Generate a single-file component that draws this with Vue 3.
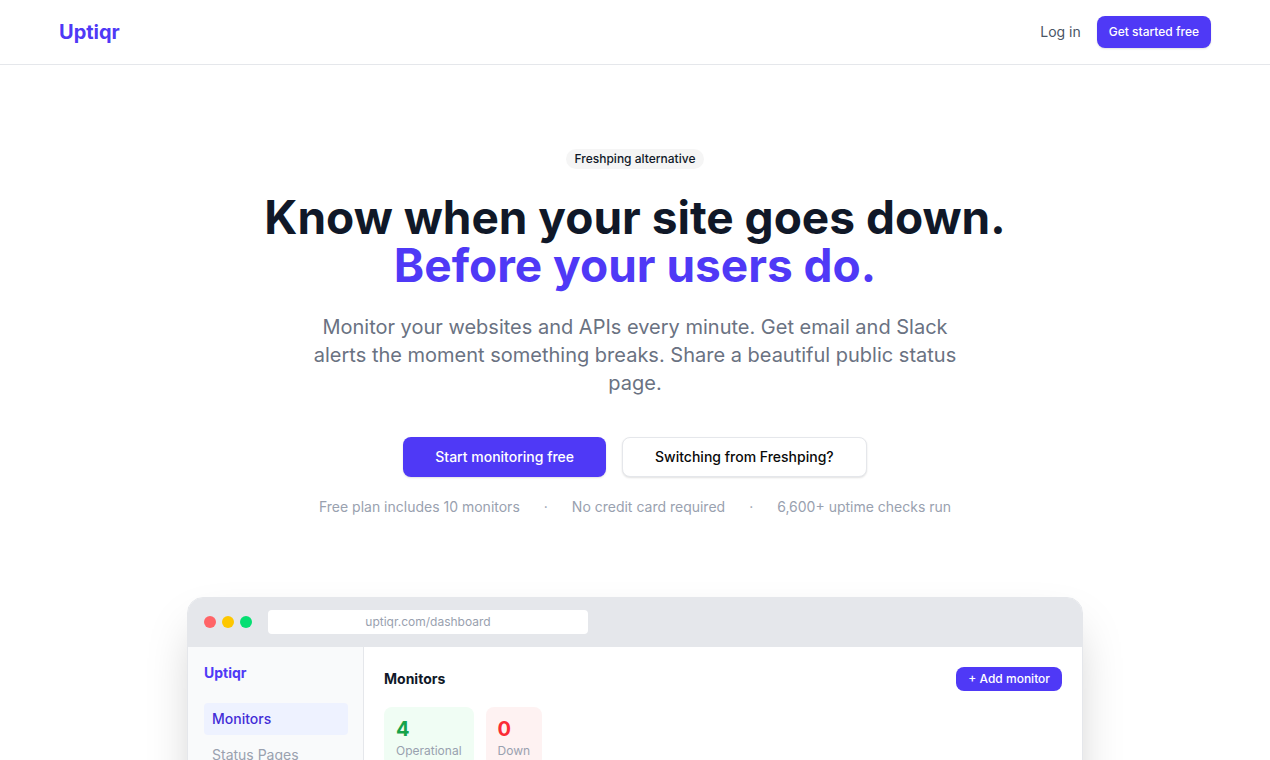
<script setup>
const notes = ['Free plan includes 10 monitors', 'No credit card required', '6,600+ uptime checks run']
const stats = [
  { value: 4, label: 'Operational', tone: 'up' },
  { value: 0, label: 'Down', tone: 'down' },
]
</script>

<template>
  <div class="page">
    <header class="site-header">
      <nav class="nav">
        <a class="brand" href="#">Uptiqr</a>
        <div class="nav-actions">
          <a class="login" href="#login">Log in</a>
          <button class="btn btn-small" type="button">Get started free</button>
        </div>
      </nav>
    </header>

    <main>
      <section class="hero">
        <span class="badge">Freshping alternative</span>
        <h1>Know when your site goes down.<br><span class="accent">Before your users do.</span></h1>
        <p class="lead">
          Monitor your websites and APIs every minute. Get email and Slack alerts the moment
          something breaks. Share a beautiful public status page.
        </p>
        <div class="cta">
          <button class="btn btn-large" type="button">Start monitoring free</button>
          <button class="btn btn-large btn-outline" type="button">Switching from Freshping?</button>
        </div>
        <div class="notes">
          <template v-for="(note, i) in notes" :key="note">
            <span v-if="i > 0">·</span>
            <span>{{ note }}</span>
          </template>
        </div>
      </section>

      <section class="preview">
        <div class="window">
          <div class="window-bar">
            <div class="dots">
              <span class="dot red"></span>
              <span class="dot yellow"></span>
              <span class="dot green"></span>
            </div>
            <div class="address">uptiqr.com/dashboard</div>
          </div>
          <div class="window-body">
            <aside class="sidebar">
              <div class="side-brand">Uptiqr</div>
              <a class="side-link active" href="#monitors">Monitors</a>
              <a class="side-link" href="#status">Status Pages</a>
            </aside>
            <div class="content">
              <div class="content-head">
                <h2>Monitors</h2>
                <button class="add" type="button">+ Add monitor</button>
              </div>
              <div class="stats">
                <div v-for="s in stats" :key="s.label" class="stat" :class="s.tone">
                  <div class="stat-value">{{ s.value }}</div>
                  <div class="stat-label">{{ s.label }}</div>
                </div>
              </div>
            </div>
          </div>
        </div>
      </section>
    </main>
  </div>
</template>

<style>
body {
  margin: 0;
  background: #fff;
}
</style>

<style scoped>
.page {
  font-family: Inter, "Liberation Sans", sans-serif;
  font-size: 14px;
  line-height: 20px;
  color: #101828;
  overflow: hidden;
}
.page * {
  box-sizing: border-box;
}
a {
  text-decoration: none;
}
button {
  font-family: inherit;
  cursor: pointer;
}
.site-header {
  border-bottom: 1px solid #e5e7eb;
}
.nav {
  max-width: 1152px;
  height: 64px;
  margin: 0 auto;
  display: flex;
  align-items: center;
  justify-content: space-between;
}
.brand {
  font-size: 20px;
  line-height: 28px;
  font-weight: 700;
  color: #4f39f6;
}
.nav-actions {
  display: flex;
  align-items: center;
  gap: 16px;
}
.login {
  color: #4a5565;
}
.btn {
  border: 0;
  border-radius: 8px;
  background: #4f39f6;
  color: #fff;
  font-weight: 500;
  box-shadow: 0 1px 2px rgba(0, 0, 0, 0.12);
}
.btn-small {
  padding: 8px 12px;
  font-size: 12px;
  line-height: 16px;
}
.btn-large {
  padding: 10px 32px;
  font-size: 14px;
  line-height: 20px;
}
.btn-outline {
  padding: 9px 32px;
  border: 1px solid #e5e7eb;
  background: #fff;
  color: #0a0a0a;
}
.hero {
  display: flex;
  flex-direction: column;
  align-items: center;
  padding: 84px 24px 80px;
  text-align: center;
}
.badge {
  padding: 2px 9px;
  border-radius: 10px;
  background: #f5f5f5;
  font-size: 12px;
  line-height: 16px;
  font-weight: 500;
}
h1 {
  margin: 24px 0 0;
  font-size: 46px;
  line-height: 48px;
  font-weight: 700;
}
.accent {
  color: #4f39f6;
}
.lead {
  max-width: 672px;
  margin: 24px 0 0;
  font-size: 20px;
  line-height: 28px;
  color: #6a7282;
}
.cta {
  display: flex;
  gap: 16px;
  margin-top: 40px;
}
.notes {
  display: flex;
  gap: 24px;
  margin-top: 20px;
  color: #99a1af;
}
.preview {
  padding: 0 24px 80px;
}
.window {
  max-width: 896px;
  margin: 0 auto;
  border: 1px solid #e5e7eb;
  border-radius: 16px;
  overflow: hidden;
  box-shadow: 0 25px 50px -12px rgba(0, 0, 0, 0.25);
}
.window-bar {
  display: flex;
  align-items: center;
  gap: 16px;
  padding: 12px 16px;
  background: #e5e7eb;
  border-bottom: 1px solid #e5e7eb;
}
.dots {
  display: flex;
  gap: 6px;
}
.dot {
  width: 12px;
  height: 12px;
  border-radius: 50%;
}
.red {
  background: #ff6467;
}
.yellow {
  background: #fdc700;
}
.green {
  background: #05df72;
}
.address {
  flex: 0 1 320px;
  padding: 4px 12px;
  border-radius: 4px;
  background: #fff;
  font-size: 12px;
  line-height: 16px;
  text-align: center;
  color: #99a1af;
}
.window-body {
  display: flex;
  min-height: 400px;
  background: #fff;
}
.sidebar {
  display: flex;
  flex-direction: column;
  gap: 4px;
  width: 176px;
  padding: 16px;
  padding-right: 15px;
  border-right: 1px solid #e5e7eb;
  background: #f9fafb;
}
.side-brand {
  margin-bottom: 16px;
  font-weight: 700;
  color: #4f39f6;
}
.side-link {
  padding: 6px 8px;
  border-radius: 4px;
  color: #99a1af;
}
.side-link.active {
  background: #eef2ff;
  color: #432dd7;
  font-weight: 500;
}
.content {
  flex: 1;
  padding: 20px;
}
.content-head {
  display: flex;
  align-items: center;
  justify-content: space-between;
}
h2 {
  margin: 0;
  font-size: 14px;
  line-height: 20px;
  font-weight: 700;
}
.add {
  padding: 4px 12px;
  border: 0;
  border-radius: 8px;
  background: #4f39f6;
  color: #fff;
  font-size: 12px;
  line-height: 16px;
  font-weight: 500;
}
.stats {
  display: flex;
  gap: 12px;
  margin-top: 16px;
}
.stat {
  padding: 8px 12px;
  border-radius: 8px;
}
.stat.up {
  background: #f0fdf4;
}
.stat.down {
  background: #fef2f2;
}
.stat-value {
  font-size: 20px;
  line-height: 28px;
  font-weight: 700;
}
.up .stat-value {
  color: #16a34a;
}
.down .stat-value {
  color: #fb2c36;
}
.stat-label {
  font-size: 12px;
  line-height: 16px;
  color: #99a1af;
}
</style>
